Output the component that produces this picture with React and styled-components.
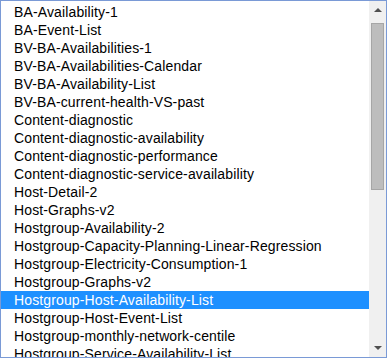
import React, { useState } from "react";
import styled, { createGlobalStyle } from "styled-components";

const GlobalStyle = createGlobalStyle`
  html, body {
    margin: 0;
    padding: 0;
    background: #ffffff;
  }
`;

const dashboards = [
  "BA-Availability-1",
  "BA-Event-List",
  "BV-BA-Availabilities-1",
  "BV-BA-Availabilities-Calendar",
  "BV-BA-Availability-List",
  "BV-BA-current-health-VS-past",
  "Content-diagnostic",
  "Content-diagnostic-availability",
  "Content-diagnostic-performance",
  "Content-diagnostic-service-availability",
  "Host-Detail-2",
  "Host-Graphs-v2",
  "Hostgroup-Availability-2",
  "Hostgroup-Capacity-Planning-Linear-Regression",
  "Hostgroup-Electricity-Consumption-1",
  "Hostgroup-Graphs-v2",
  "Hostgroup-Host-Availability-List",
  "Hostgroup-Host-Event-List",
  "Hostgroup-monthly-network-centile",
  "Hostgroup-Service-Availability-List",
  "Hostgroup-Service-Event-List",
];

const ListBox = styled.div`
  display: flex;
  width: 387px;
  height: 358px;
  box-sizing: border-box;
  border: 1px solid #7a9ad6;
  background: #ffffff;
  overflow: hidden;
`;

const Options = styled.ul`
  flex: 1;
  margin: 0;
  padding: 2px 0 0;
  list-style: none;
  overflow: hidden;
  font-family: "Liberation Sans", Arial, sans-serif;
  font-size: 14px;
  letter-spacing: 0.13px;
`;

const Option = styled.li`
  height: 18px;
  line-height: 18px;
  padding-left: 13px;
  white-space: nowrap;
  cursor: default;
  color: ${(p) => (p.selected ? "#ffffff" : "#000000")};
  background: ${(p) => (p.selected ? "#1e90ff" : "transparent")};
`;

const ScrollBar = styled.div`
  width: 17px;
  display: flex;
  flex-direction: column;
  align-items: center;
  background: #f0f0f0;
`;

const Arrow = styled.div`
  height: 18px;
  width: 17px;
  display: flex;
  align-items: center;
  justify-content: center;
  flex: none;

  &::after {
    content: "";
    border-left: 4px solid transparent;
    border-right: 4px solid transparent;
    ${(p) =>
      p.down
        ? "border-top: 4px solid #505050;"
        : "border-bottom: 4px solid #505050;"}
  }
`;

const Track = styled.div`
  flex: 1;
  width: 100%;
  padding-top: 4px;
  box-sizing: border-box;
  display: flex;
  justify-content: center;
`;

const Thumb = styled.div`
  width: 13px;
  height: 167px;
  box-sizing: border-box;
  background: #bdbdbd;
  border: 1px solid #a6a6a6;
`;

export default function App() {
  const [selected, setSelected] = useState("Hostgroup-Host-Availability-List");

  return (
    <>
      <GlobalStyle />
      <ListBox>
        <Options>
          {dashboards.map((name) => (
            <Option
              key={name}
              selected={name === selected}
              onClick={() => setSelected(name)}
            >
              {name}
            </Option>
          ))}
        </Options>
        <ScrollBar>
          <Arrow />
          <Track>
            <Thumb />
          </Track>
          <Arrow down />
        </ScrollBar>
      </ListBox>
    </>
  );
}
